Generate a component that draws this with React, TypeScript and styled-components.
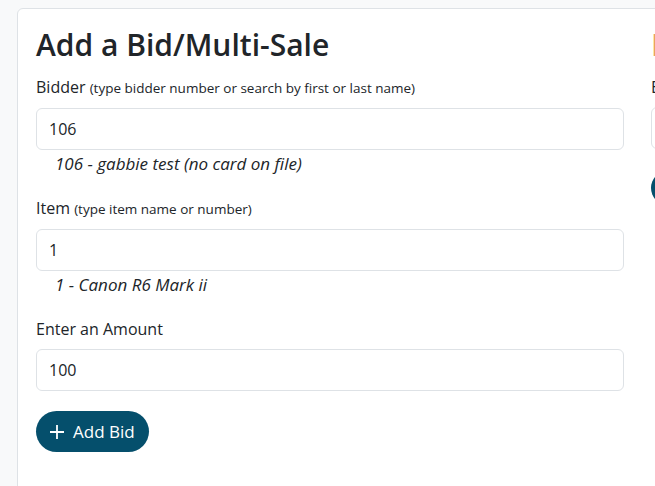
import React from "react";
import styled, { createGlobalStyle } from "styled-components";

const GlobalStyle = createGlobalStyle`
  html, body {
    margin: 0;
    padding: 0;
    background: #f8f9fa;
    overflow: hidden;
  }
  body {
    font-family: "Open Sans", "Noto Sans", sans-serif;
    color: #212529;
  }
`;

const Page = styled.div`
  padding: 8px 0 0 17px;
  width: 1400px;
`;

const Card = styled.div`
  background: #fff;
  border: 1px solid #dee2e6;
  border-radius: 6px;
  padding: 16px 18px 30px;
  display: grid;
  grid-template-columns: 588px 588px;
  column-gap: 27px;
  min-height: 480px;
`;

const Column = styled.div`
  display: flex;
  flex-direction: column;
  align-items: flex-start;
`;

const Heading = styled.h2<{ $accent?: boolean }>`
  margin: 0 0 11px;
  font-size: 30px;
  font-weight: 600;
  line-height: 1.3;
  color: ${({ $accent }) => ($accent ? "#e9a25f" : "#212529")};
`;

const Group = styled.div`
  width: 100%;
  margin-bottom: 20px;
`;

const Label = styled.label`
  display: block;
  font-size: 16px;
  line-height: 24px;
  margin-bottom: 8px;
  color: #212529;
`;

const Hint = styled.small`
  font-size: 13.5px;
`;

const Input = styled.input`
  display: block;
  width: 100%;
  box-sizing: border-box;
  height: 42px;
  padding: 8px 12px;
  font-family: inherit;
  font-size: 16px;
  color: #212529;
  border: 1px solid #dee2e6;
  border-radius: 6px;
  background: #fff;
  outline: none;
`;

const Match = styled.div`
  font-style: italic;
  font-size: 17px;
  line-height: 24px;
  margin-top: 2px;
  padding-left: 19px;
`;

const PrimaryButton = styled.button`
  display: inline-flex;
  align-items: center;
  gap: 8px;
  height: 41px;
  padding: 0 14px 0 13px;
  border: none;
  border-radius: 21px;
  background: #054f6c;
  color: #fff;
  font-family: inherit;
  font-size: 17px;
  cursor: pointer;
`;

const RoundButton = styled.button`
  width: 34px;
  height: 34px;
  margin-top: 2px;
  border: none;
  border-radius: 50%;
  background: #054f6c;
`;

const Plus = () => (
  <svg width="16" height="16" viewBox="0 0 16 16" fill="none">
    <path d="M8 1v14M1 8h14" stroke="#fff" strokeWidth="1.8" />
  </svg>
);

export default function App() {
  return (
    <>
      <GlobalStyle />
      <Page>
        <Card>
          <Column>
            <Heading>Add a Bid/Multi-Sale</Heading>
            <Group>
              <Label>
                Bidder <Hint>(type bidder number or search by first or last name)</Hint>
              </Label>
              <Input defaultValue="106" />
              <Match>106 - gabbie test (no card on file)</Match>
            </Group>
            <Group>
              <Label>
                Item <Hint>(type item name or number)</Hint>
              </Label>
              <Input defaultValue="1" />
              <Match>1 - Canon R6 Mark ii</Match>
            </Group>
            <Group>
              <Label>Enter an Amount</Label>
              <Input defaultValue="100" />
            </Group>
            <PrimaryButton>
              <Plus />
              Add Bid
            </PrimaryButton>
          </Column>
          <Column>
            <Heading $accent>Bid History</Heading>
            <Group>
              <Label>Bidder</Label>
              <Input />
            </Group>
            <RoundButton />
          </Column>
        </Card>
      </Page>
    </>
  );
}
